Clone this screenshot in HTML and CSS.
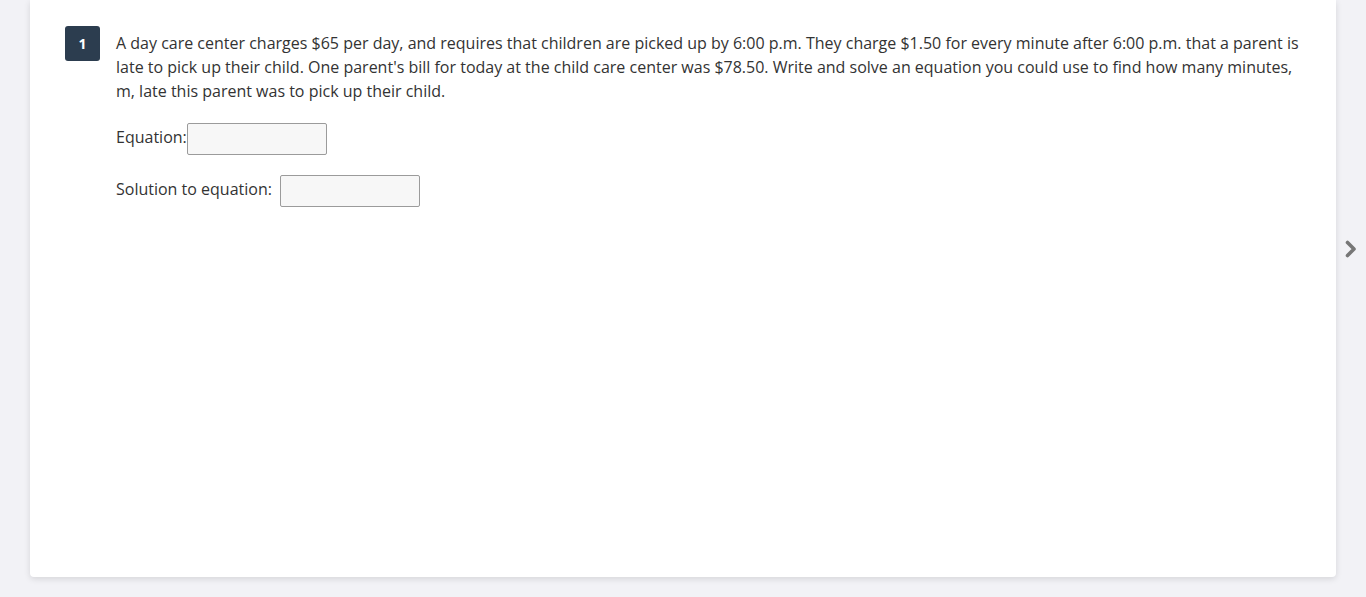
FILE: index.html
```html
<!DOCTYPE html>
<html>
<head>
<meta charset="utf-8">
<link rel="stylesheet" href="styles.css">
</head>
<body>
<div class="page">
  <main class="card">
    <div class="question">
      <div class="badge">1</div>
      <div class="content">
        <p class="prompt">A day care center charges $65 per day, and requires that children are picked up by 6:00 p.m. They charge $1.50 for every minute after 6:00 p.m. that a parent is late to pick up their child. One parent's bill for today at the child care center was $78.50. Write and solve an equation you could use to find how many minutes, m, late this parent was to pick up their child.</p>
        <div class="field"><span class="label">Equation:</span><input class="answer" type="text"></div>
        <div class="field"><span class="label spaced">Solution to equation:</span><input class="answer" type="text"></div>
      </div>
    </div>
  </main>
  <div class="gutter">
    <svg class="chev" width="12" height="18" viewBox="0 0 12 18"><path d="M2.5 2.5 L9 9 L2.5 15.5" fill="none" stroke="#777777" stroke-width="3.6" stroke-linecap="round" stroke-linejoin="round"/></svg>
  </div>
</div>
</body>
</html>
```
FILE: styles.css
```css
html, body {
  margin: 0;
  padding: 0;
  background: #f2f2f6;
  height: 597px;
  overflow: hidden;
}
.page {
  display: flex;
  align-items: flex-start;
  padding-left: 30px;
}
.card {
  width: 1306px;
  height: 577px;
  background: #ffffff;
  border-radius: 0 0 4px 4px;
  box-shadow: 0 2px 6px rgba(0, 0, 0, 0.12);
  box-sizing: border-box;
  padding: 26px 36px 0 35px;
  font-family: "Open Sans", sans-serif;
  color: #333333;
}
.question {
  display: flex;
  gap: 16px;
}
.badge {
  flex: none;
  width: 35px;
  height: 35px;
  background: #2c3d4f;
  color: #ffffff;
  border-radius: 3px;
  font-family: "Open Sans", sans-serif;
  font-weight: 700;
  font-size: 14px;
  display: flex;
  align-items: center;
  justify-content: center;
}
.content {
  flex: 1;
  display: flex;
  flex-direction: column;
  gap: 20px;
}
.prompt {
  margin: 5px 0 0 0;
  font-size: 16px;
  line-height: 24px;
}
.field {
  display: flex;
  align-items: center;
  font-size: 16px;
  line-height: 24px;
}
.label {
  margin-bottom: 4px;
}
.label.spaced {
  margin-right: 8px;
}
.answer {
  width: 140px;
  height: 32px;
  box-sizing: border-box;
  background: #f7f7f7;
  border: 1px solid #9b9b9b;
  border-radius: 2px;
  margin: 0;
  padding: 0 6px;
}
.gutter {
  flex: 1;
  display: flex;
  justify-content: center;
  padding-top: 240px;
}
.chev {
  display: block;
}
```
